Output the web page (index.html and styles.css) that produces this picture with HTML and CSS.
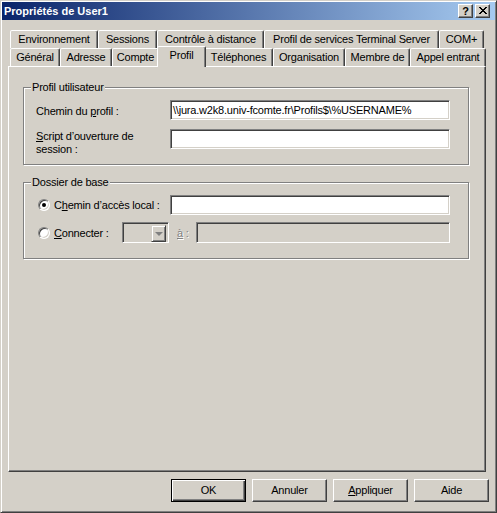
FILE: index.html
```html
<!DOCTYPE html>
<html lang="fr">
<head>
<meta charset="utf-8">
<title>Propriétés de User1</title>
<link rel="stylesheet" href="styles.css">
</head>
<body>
<div class="window">
  <div class="titlebar">
    <span class="title">Propriétés de User1</span>
    <div class="tb-buttons">
      <span class="tb-btn help">?</span>
      <span class="tb-btn close">
        <svg width="8" height="7" viewBox="0 0 8 7" shape-rendering="crispEdges">
          <rect x="0" y="0" width="2" height="1"/><rect x="6" y="0" width="2" height="1"/>
          <rect x="1" y="1" width="2" height="1"/><rect x="5" y="1" width="2" height="1"/>
          <rect x="2" y="2" width="4" height="1"/>
          <rect x="3" y="3" width="2" height="1"/>
          <rect x="2" y="4" width="4" height="1"/>
          <rect x="1" y="5" width="2" height="1"/><rect x="5" y="5" width="2" height="1"/>
          <rect x="0" y="6" width="2" height="1"/><rect x="6" y="6" width="2" height="1"/>
        </svg>
      </span>
    </div>
  </div>
  <div class="client">
    <div class="tabctl">
      <div class="tabrow">
        <div class="tab w-env">Environnement</div>
        <div class="tab w-ses">Sessions</div>
        <div class="tab w-ctl">Contrôle à distance</div>
        <div class="tab w-pst">Profil de services Terminal Server</div>
        <div class="tab w-com">COM+</div>
      </div>
      <div class="tabrow">
        <div class="tab w-gen">Général</div>
        <div class="tab w-adr">Adresse</div>
        <div class="tab w-cpt">Compte</div>
        <div class="tab w-pro selected">Profil</div>
        <div class="tab w-tel">Téléphones</div>
        <div class="tab w-org">Organisation</div>
        <div class="tab w-mem">Membre de</div>
        <div class="tab w-app">Appel entrant</div>
      </div>
      <div class="panel">
        <div class="group g1">
          <span class="legend">Profil utilisateur</span>
          <div class="grid">
            <span class="lbl">Chemin du <u>p</u>rofil :</span>
            <div class="field">\\jura.w2k8.univ-fcomte.fr\Profils$\%USERNAME%</div>
            <span class="lbl lbl-top"><u>S</u>cript d’ouverture de<br>session :</span>
            <div class="field"></div>
          </div>
        </div>
        <div class="group g2">
          <span class="legend">Dossier de base</span>
          <div class="row r1">
            <span class="radio-lbl w-local"><span class="radio checked"></span><span>C<u>h</u>emin d’accès local :</span></span>
            <div class="field"></div>
          </div>
          <div class="row r2">
            <span class="radio-lbl w-conn"><span class="radio"></span><span><u>C</u>onnecter :</span></span>
            <div class="combo"><span class="drop"><span class="arrow"></span></span></div>
            <span class="disabled-lbl"><u>à</u> :</span>
            <div class="field disabled w-to"></div>
          </div>
        </div>
      </div>
    </div>
    <div class="buttons">
      <button class="btn default">OK</button>
      <button class="btn">Annuler</button>
      <button class="btn"><u>A</u>ppliquer</button>
      <button class="btn">Aide</button>
    </div>
  </div>
</div>
</body>
</html>
```

FILE: styles.css
```css
html, body {
  margin: 0;
  padding: 0;
  background: #d4d0c8;
}
body {
  font-family: "Liberation Sans", Arial, sans-serif;
  font-size: 11px;
  line-height: 13px;
  letter-spacing: -0.2px;
  color: #000;
}
.window {
  box-sizing: border-box;
  width: 497px;
  height: 513px;
  padding: 1px;
  border: 1px solid;
  border-color: #d4d0c8 #404040 #404040 #d4d0c8;
  box-shadow: inset 1px 1px #fff, inset -1px -1px #808080;
  display: flex;
  flex-direction: column;
  background: #d4d0c8;
}
.titlebar {
  height: 18px;
  flex: none;
  display: flex;
  align-items: center;
  justify-content: space-between;
  background: linear-gradient(to right, #0a246a, #a6caf0);
  padding: 0 5px 0 2px;
}
.title {
  color: #fff;
  font-weight: bold;
  line-height: 18px;
  letter-spacing: 0;
  white-space: nowrap;
}
.tb-buttons {
  display: flex;
  gap: 2px;
}
.tb-btn {
  box-sizing: border-box;
  width: 15px;
  height: 14px;
  background: #d4d0c8;
  border: 1px solid;
  border-color: #fff #404040 #404040 #fff;
  box-shadow: inset -1px -1px #808080;
  display: flex;
  align-items: center;
  justify-content: center;
}
.help {
  font-weight: bold;
  font-size: 11px;
  line-height: 12px;
  padding-bottom: 1px;
}
.close svg {
  fill: #000;
  margin-bottom: 1px;
}
.client {
  flex: 1;
  padding: 10px 0 0 6px;
  display: flex;
  flex-direction: column;
}
.tabctl {
  width: 478px;
}
.tabrow {
  display: flex;
  align-items: flex-end;
  padding-left: 2px;
  height: 18px;
}
.tab {
  box-sizing: border-box;
  height: 18px;
  border: 1px solid;
  border-bottom: none;
  border-color: #fff #404040 transparent #fff;
  border-radius: 2px 2px 0 0;
  box-shadow: inset -1px 0 #808080;
  background: #d4d0c8;
  text-align: center;
  white-space: nowrap;
  line-height: 17px;
  overflow: hidden;
}
.tab.selected {
  position: relative;
  z-index: 1;
  height: 21px;
  margin: 0 -2px -1px -2px;
  padding-bottom: 3px;
}
.w-env { width: 88px; }
.w-ses { width: 59px; }
.w-ctl { width: 107px; }
.w-pst { width: 175px; }
.w-com { width: 45px; }
.w-gen { width: 50px; }
.w-adr { width: 52px; }
.w-cpt { width: 47px; }
.w-pro { width: 49px; }
.w-tel { width: 69px; }
.w-org { width: 72px; }
.w-mem { width: 65px; }
.w-app { width: 76px; }
.panel {
  box-sizing: border-box;
  height: 406px;
  border: 1px solid;
  border-color: #fff #404040 #404040 #fff;
  box-shadow: inset -1px -1px #808080;
  padding: 20px 0 0 14px;
}
.group {
  position: relative;
  box-sizing: border-box;
  width: 446px;
  border: 1px solid #808080;
  box-shadow: inset 1px 1px #fff, 1px 1px #fff;
}
.legend {
  position: absolute;
  top: -7px;
  left: 7px;
  padding: 0 1px;
  background: #d4d0c8;
  white-space: nowrap;
}
.g1 {
  padding: 12px 0 15px 12px;
}
.grid {
  display: grid;
  grid-template-columns: 134px 280px;
  grid-template-rows: 20px 20px;
  row-gap: 9px;
  align-items: center;
}
.lbl {
  white-space: nowrap;
  padding-top: 2px;
}
.lbl.lbl-top {
  align-self: start;
  padding-top: 1px;
}
.field {
  box-sizing: border-box;
  height: 20px;
  width: 280px;
  background: #fff;
  border: 1px solid;
  border-color: #808080 #fff #fff #808080;
  box-shadow: inset 1px 1px #404040, inset -1px -1px #d4d0c8;
  padding: 2px 2px 0 2px;
  white-space: nowrap;
  overflow: hidden;
  line-height: 15px;
}
.g2 {
  margin-top: 17px;
  padding: 12px 0 15px 14px;
}
.row {
  display: flex;
  align-items: center;
}
.r1 {
  height: 20px;
}
.r2 {
  height: 21px;
  margin-top: 7px;
}
.radio-lbl {
  display: flex;
  align-items: center;
  gap: 4px;
  white-space: nowrap;
  padding-top: 1px;
}
.w-local { width: 132px; }
.w-conn { width: 84px; }
.radio {
  box-sizing: border-box;
  position: relative;
  width: 12px;
  height: 12px;
  flex: none;
  border-radius: 50%;
  background: #fff;
  border: 1px solid;
  border-color: #808080 #fff #fff #808080;
  box-shadow: inset 1px 1px #404040, inset -1px -1px #d4d0c8;
  margin-top: -1px;
}
.radio.checked::after {
  content: "";
  position: absolute;
  left: 3px;
  top: 3px;
  width: 4px;
  height: 4px;
  border-radius: 50%;
  background: #000;
}
.combo {
  box-sizing: border-box;
  width: 47px;
  height: 21px;
  border: 1px solid;
  border-color: #808080 #fff #fff #808080;
  box-shadow: inset 1px 1px #404040, inset -1px -1px #d4d0c8;
  background: #d4d0c8;
  display: flex;
  justify-content: flex-end;
  padding: 2px 2px 2px 0;
  margin-right: 8px;
}
.drop {
  box-sizing: border-box;
  width: 15px;
  height: 17px;
  border: 1px solid;
  border-color: #d4d0c8 #404040 #404040 #d4d0c8;
  box-shadow: inset 1px 1px #fff, inset -1px -1px #808080;
  display: flex;
  align-items: center;
  justify-content: center;
}
.arrow {
  width: 0;
  height: 0;
  border-left: 4px solid transparent;
  border-right: 4px solid transparent;
  border-top: 4px solid #808080;
  margin-top: 1px;
}
.disabled-lbl {
  width: 19px;
  color: #808080;
  text-shadow: 1px 1px #fff;
  white-space: nowrap;
  padding-top: 1px;
}
.field.disabled {
  background: #d4d0c8;
  height: 21px;
}
.field.w-to {
  width: 254px;
}
.buttons {
  display: flex;
  justify-content: flex-end;
  gap: 6px;
  margin-top: 7px;
  padding-right: 6px;
}
.btn {
  box-sizing: border-box;
  width: 75px;
  height: 23px;
  margin: 0;
  padding: 0 0 1px 0;
  font: inherit;
  letter-spacing: -0.2px;
  color: #000;
  background: #d4d0c8;
  border: 1px solid;
  border-color: #fff #404040 #404040 #fff;
  box-shadow: inset -1px -1px #808080;
  border-radius: 0;
}
.btn.default {
  border: 1px solid #000;
  box-shadow: inset 1px 1px #fff, inset -1px -1px #404040, inset -2px -2px #808080;
}
```
